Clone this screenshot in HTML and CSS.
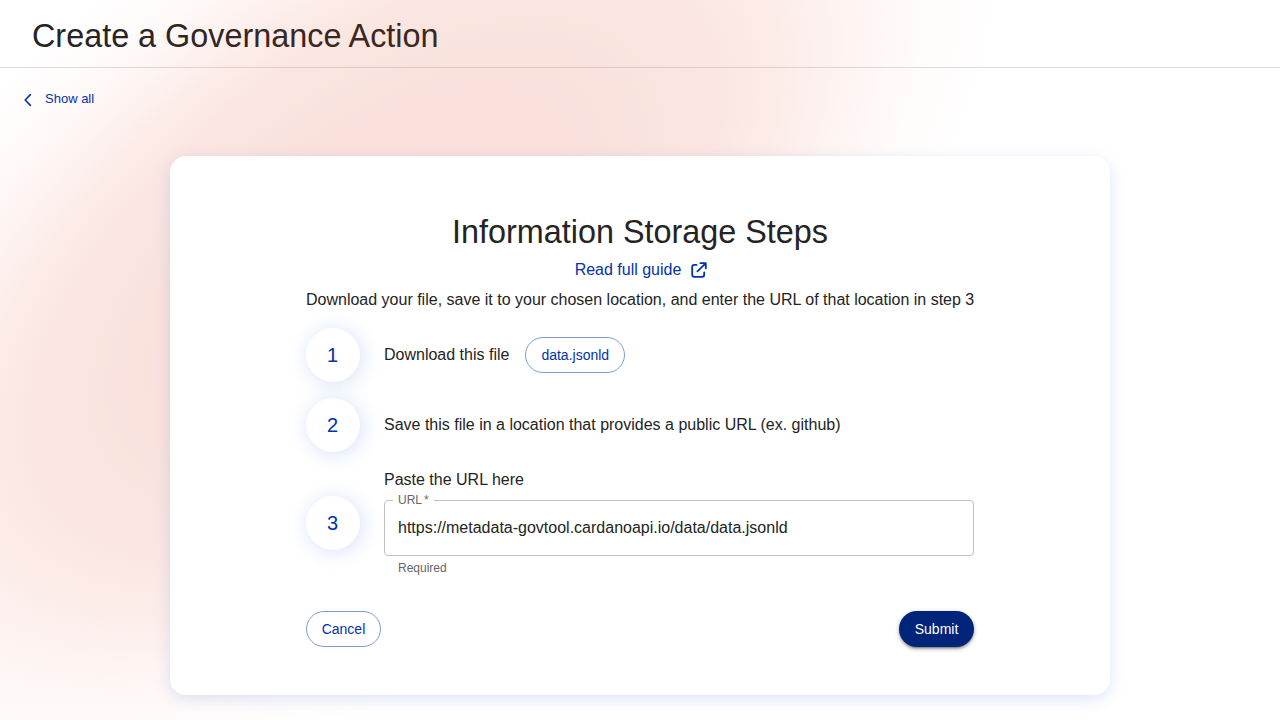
FILE: index.html
```html
<!DOCTYPE html>
<html lang="en">
<head>
<meta charset="utf-8">
<title>Create a Governance Action</title>
<link rel="stylesheet" href="styles.css">
</head>
<body>
<div class="page">
  <header class="topbar"><h1 class="title">Create a Governance Action</h1></header>
  <svg class="glow" width="1280" height="720" viewBox="0 0 1280 720" aria-hidden="true">
    <defs>
      <radialGradient id="glow">
        <stop offset="0" stop-color="#e42a08" stop-opacity=".15"/>
        <stop offset=".3" stop-color="#e42a10" stop-opacity=".147"/>
        <stop offset=".42" stop-color="#d83810" stop-opacity=".14"/>
        <stop offset=".54" stop-color="#dc3a10" stop-opacity=".125"/>
        <stop offset=".64" stop-color="#e04018" stop-opacity=".1"/>
        <stop offset=".75" stop-color="#e83c20" stop-opacity=".057"/>
        <stop offset=".87" stop-color="#f05020" stop-opacity=".02"/>
        <stop offset="1" stop-color="#f05020" stop-opacity="0"/>
      </radialGradient>
    </defs>
    <ellipse rx="735" ry="385" fill="url(#glow)" transform="translate(376 262) rotate(-37)"/>
  </svg>
  <a class="back">
    <svg class="back-icon" width="8" height="14" viewBox="0 0 8 14"><path d="M6.4 1.6 1.2 7l5.2 5.4" fill="none" stroke="currentColor" stroke-width="1.6" stroke-linecap="round" stroke-linejoin="round"/></svg>
    <span>Show all</span>
  </a>
  <main class="card">
    <h2 class="title card-title">Information Storage Steps</h2>
    <a class="guide">Read full guide
      <svg width="16" height="16" viewBox="0 0 16 16" fill="none" stroke="currentColor" stroke-width="1.8" stroke-linecap="round" stroke-linejoin="round"><path d="M5.6 2.8H3.2Q1.2 2.8 1.2 4.8V12.8Q1.2 14.8 3.2 14.8h8q2 0 2-2V10.4M9.4 1.2H14.8V6.4M14.6 1.4 6.4 9.4"/></svg>
    </a>
    <p class="intro">Download your file, save it to your chosen location, and enter the URL of that location in step 3</p>
    <div class="steps">
      <div class="step"><div class="num">1</div><div class="text">Download this file</div><button class="btn outline file">data.jsonld</button></div>
      <div class="step"><div class="num">2</div><div class="text">Save this file in a location that provides a public URL (ex. github)</div></div>
      <div class="step"><div class="num">3</div>
        <div class="field">
          <label class="text" for="url">Paste the URL here</label>
          <div class="control"><span class="legend">URL<span class="star">*</span></span><input id="url" class="input" value="https://metadata-govtool.cardanoapi.io/data/data.jsonld"></div>
          <div class="hint">Required</div>
        </div>
      </div>
    </div>
    <div class="actions"><button class="btn outline">Cancel</button><button class="btn solid">Submit</button></div>
  </main>
</div>
</body>
</html>
```
FILE: styles.css
```css
* { box-sizing: border-box; }
body { margin: 0; background: #fff; color: #242424; font: 16px/24px "Liberation Sans", Arial, sans-serif; overflow: hidden; }
.page { position: relative; height: 720px; display: flex; flex-direction: column; overflow: hidden; }
.glow { position: absolute; inset: 0; pointer-events: none; }
.topbar { height: 68px; flex: none; padding: 15px 32px 0; border-bottom: 1px solid #dedfe1; }
.title { margin: 0; font-size: 32.36px; line-height: 42px; font-weight: 400; }
.back { position: relative; display: flex; align-items: center; gap: 13px; margin: 21px 0 0 24px; height: 20px; color: #0033ad; font-size: 13px; line-height: 20px; }
.back-icon { margin-top: 2px; }
.card { position: relative; width: 940px; height: 539px; flex: none; margin: 47px auto 0; padding: 55px 136px 48px; border-radius: 16px; background: #fff; box-shadow: 0 4px 15px rgba(47, 98, 220, .17); display: flex; flex-direction: column; }
.card-title { text-align: center; }
.guide { display: flex; justify-content: center; align-items: center; gap: 10px; height: 24px; margin-top: 5px; padding-left: 2px; color: #0033ad; }
.intro { margin: 6px 0 0; white-space: nowrap; }
.steps { display: flex; flex-direction: column; gap: 16px; margin-top: 16px; }
.step { display: flex; align-items: center; }
.num { flex: none; width: 54px; height: 54px; margin-right: 24px; border-radius: 50%; background: #fff; box-shadow: 2px 2px 20px rgba(47, 98, 220, .2); color: #0033ad; font-size: 20px; line-height: 54px; text-align: center; text-indent: -1px; }
.text { display: block; }
.file { margin-left: 16px; }
.field { flex: 1; }
.control { position: relative; height: 56px; margin-top: 8px; border: 1px solid #c0c0c1; border-radius: 4px; }
.legend { position: absolute; left: 8px; top: -9px; width: 41px; padding: 0 5px; background: #fff; color: #666; font-size: 12px; line-height: 16px; }
.star { margin-left: 2px; }
.input { width: 100%; height: 54px; padding: 0 13px; border: 0; outline: 0; background: transparent; color: inherit; font: inherit; }
.hint { margin: 3px 14px 0; color: #666; font-size: 12px; line-height: 18px; }
.actions { display: flex; justify-content: space-between; margin-top: auto; }
.btn { height: 36px; padding: 0 15px; border: 1px solid transparent; border-radius: 18px; font: 14px/24px "Liberation Sans", Arial, sans-serif; }
.actions .btn { padding: 0 14.7px; }
.outline { background: #fff; border-color: #8099d6; color: #0033ad; }
.solid { background: #00247a; color: #fff; box-shadow: 0 3px 1px -2px rgba(0,0,0,.2), 0 2px 2px rgba(0,0,0,.14), 0 1px 5px rgba(0,0,0,.12), 0 2px 4px rgba(0,0,0,.2); }
```
